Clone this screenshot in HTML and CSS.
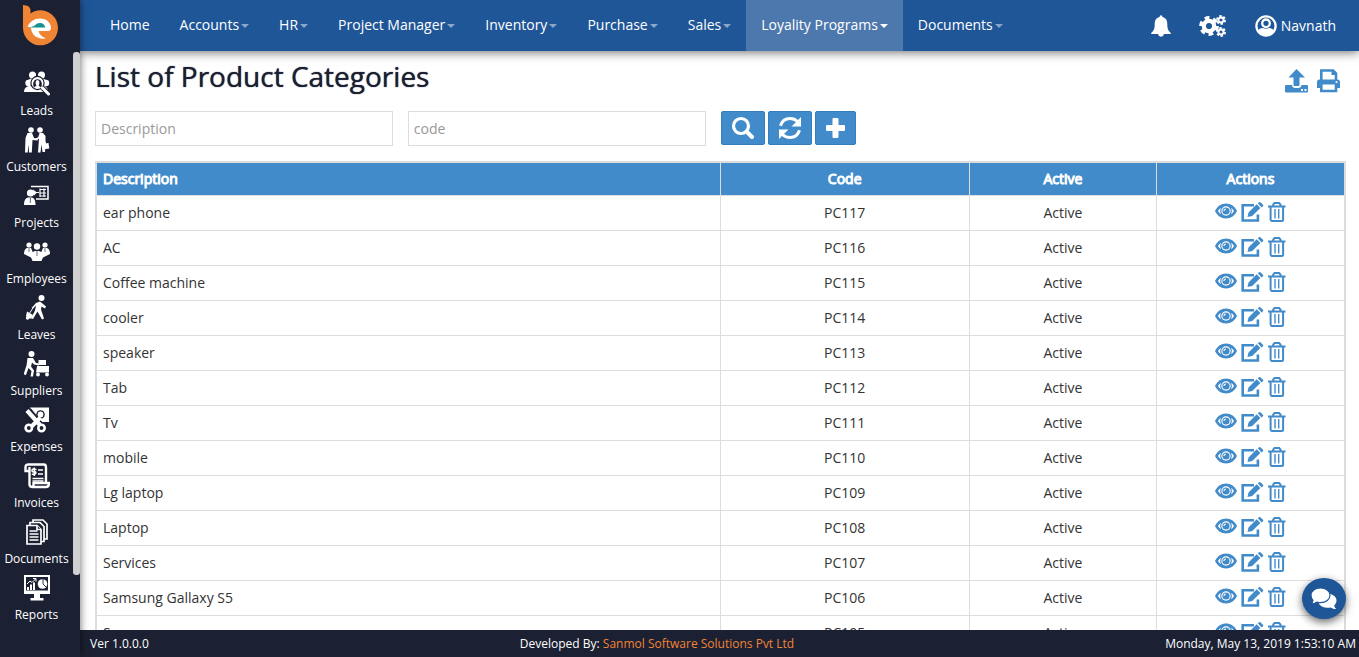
FILE: index.html
```html
<!DOCTYPE html>
<html lang="en">
<head>
<meta charset="utf-8">
<meta name="viewport" content="width=device-width, initial-scale=1">
<title>List of Product Categories</title>
<link rel="stylesheet" href="styles.css">
</head>
<body>
<svg class="sprite" aria-hidden="true">
  <symbol id="eye" viewBox="0 0 22 16"><path fill="currentColor" d="M11 0.500C6 .5 2 3.500 0 8c2 4.500 6 7.500 11 7.500s9-3 11-7.500C20 3.500 16 .5 11 .5z"/><path fill="#fff" d="M3 8q1-2 2.800-3.300-1.300 3.300 0 6.600Q4 10 3 8zM19 8q-1-2-2.800-3.300 1.300 3.300 0 6.600Q18 10 19 8z"/><circle cx="11" cy="8" r="4.700" fill="#fff"/><circle cx="11" cy="8" r="3.600" fill="currentColor"/><path d="M9 8q0-2 2-2" fill="none" stroke="#fff" stroke-width="1.100"/></symbol>
  <symbol id="edit" viewBox="0 0 23 20"><path fill="none" stroke="currentColor" stroke-width="2.600" d="M13 3.200H1.700v15.300h15.200v-6"/><path fill="currentColor" d="M6.500 15l1-4.600 8.200-8.200 3.700 3.700-8.200 8.200zM16.800 1.300L18 .2q.8-.5 1.600.2l2.400 2.300q.6.800 0 1.500l-1.400 1.200z"/></symbol>
  <symbol id="trash" viewBox="0 0 18 20"><path fill="none" stroke="currentColor" stroke-width="2" d="M0 4.500h17.500M5.200 4V2.500L6.500 1h4.700l1.300 1.500V4M2.600 5v12.500q0 1.500 1.500 1.500h9.500q1.500 0 1.500-1.500V5"/><path fill="none" stroke="currentColor" stroke-width="1.400" d="M7 7v9.500M10.700 7v9.500"/></symbol>
  <symbol id="gear" viewBox="-10 -10 20 20"><circle r="5.200" fill="none" stroke="currentColor" stroke-width="4.200"/><circle r="8.100" fill="none" stroke="currentColor" stroke-width="3.600" pathLength="12" stroke-dasharray="1.100 .9"/></symbol>
</svg>
<div class="app">
  <aside class="sidebar">
    <a class="logo" href="#" aria-label="Home page"><svg width="36" height="42" viewBox="0 0 36 42"><path fill="#f08435" d="M0 0c4 .2 7.500 1.500 7.500 5.500v3A17.500 17.500 0 1 1 0 23z"/><path fill="#fff" d="M4.500 21.500C7 17 11 13.500 17 13.500c6.500 0 11 4.200 11 9.500 0 2-1 3-3 3h-9.500c.5 3 3.500 6 7.500 7.500-9 1-14.500-3.500-15-10.500z"/><path fill="#16918f" d="M4 22.500c4 0 6.500-1 8.500-2.500 1.500-3 9-3 9.800 2.500z"/></svg></a>
    <div class="side-body">
      <nav class="side-menu" aria-label="Modules">
        <a href="#"><svg viewBox="0 0 26 26" fill="#fff"><circle cx="8.500" cy="4" r="3.500"/><circle cx="17.500" cy="4" r="3.500"/><circle cx="4.500" cy="12" r="3.200"/><circle cx="22" cy="12" r="3.200"/><path d="M4 9q4-3 9-1 5-2 9 1v5H4zM0 21q0-5 5-6h15q4 1 4 6z"/><circle cx="13.500" cy="12" r="6.600" fill="#fff" stroke="#1b2032" stroke-width="1.200"/><path d="M10 16.500q-2-4 .5-7.200Q13.500 7 16.500 9.300q2.500 3.200.5 7.200l-2.500-2q1.300-2 .8-4-.5-1.500-1.800-1.500T11.700 10.500q-.5 2 .8 4z" fill="#1b2032"/><path d="M18.500 17l6.500 6" stroke="#1b2032" stroke-width="5"/><path d="M18.500 17l6 6" stroke="#fff" stroke-width="3" stroke-linecap="round"/></svg><span>Leads</span></a>
        <a href="#"><svg viewBox="0 0 26 26" fill="#fff"><circle cx="7" cy="3" r="2.800"/><circle cx="16" cy="3" r="2.800"/><path d="M3.500 6H8l2 5 4 .5-.5 2-5-.5-.7 12.500H5l-.5-8-.8 8H1L1.500 11zM15.500 6H19l2.500 3v9L21 25h-2.500l-1-8-1 8.500H14l1-14-2.500 2-1.200-1.500 3-2z"/><path d="M17.500 17l7-1 .8 5.500-7 1zM19 17v-2h3v2"/></svg><span>Customers</span></a>
        <a href="#"><svg viewBox="0 0 26 26" fill="#fff"><path d="M7 3.500h17v12.500H12" fill="none" stroke="#fff" stroke-width="1.500"/><circle cx="6.500" cy="10" r="3.600"/><path d="M0 22q0-7 4-7.500h4q3.500.5 3.500 7.500z"/><path d="M9 6.500l4 3-3 3z"/><path d="M12 9.500h3M16 6.500h6M16 10h6M16 13h6M16 5.500v8.500M20 5.500v8.500" stroke="#fff" stroke-width="1.200"/><path d="M5.800 15h1.200v5H5.800z" fill="#7c8597"/></svg><span>Projects</span></a>
        <a href="#"><svg viewBox="0 0 26 26" fill="#fff"><circle cx="5" cy="6" r="2.600"/><circle cx="21" cy="6" r="2.600"/><path d="M0 15q0-5 3-6h4l3 7-2 3zM26 15q0-5-3-6h-4l-3 7 2 3z"/><circle cx="13" cy="7.500" r="3.200"/><path d="M6.500 17q2-5 5-5h3q3 0 5 5l-2 5h-9z"/><path d="M12.500 12h1v5h-1zM4.500 9H5.500v4h-1zM20.500 9H21.500v4h-1z" fill="#6a7285"/></svg><span>Employees</span></a>
        <a href="#"><svg viewBox="0 0 26 26" fill="#fff"><circle cx="17.500" cy="3" r="3"/><path d="M12 8l4-1.500 2.500 2 3.500 3-1 2-3.500-2-.5 3 3 9-2 1-4.500-8L9 24l-2-.5 4-8 1-5-3 3-1.500-.5z"/><path d="M9 13L5 19" stroke="#fff"/><path d="M3 16.500l6 3.500-2 3.500H4L2 21z"/><circle cx="3.500" cy="23" r="1.700"/></svg><span>Leaves</span></a>
        <a href="#"><svg viewBox="0 0 26 26" fill="#fff"><circle cx="7.500" cy="3" r="3"/><path d="M3.500 7H9l3 5 3 .5v2l-5-1-2-2-1 4 3 4-1 6H6.500l1-5.500-3-3-2.500 7-2.500-.5 3-9z"/><path d="M14.500 9h7.500v5h-7.500zM13 15h12v6.500H12zM24 15.500l1-5"/><circle cx="14" cy="23.500" r="1.900"/><circle cx="23" cy="23.500" r="1.900"/></svg><span>Suppliers</span></a>
        <a href="#"><svg viewBox="0 0 26 26" fill="#fff"><path d="M6 .5h19V15h-7L10 8z"/><circle cx="16.500" cy="7.500" r="4.300" fill="#1b2032"/><circle cx="16.500" cy="7.500" r="2.900"/><path d="M4.500 3.500l11.500 14" stroke="#1b2032" stroke-width="6.500"/><path d="M3 3.500L16 18M16.500 10.500L7 20" stroke="#fff" stroke-width="4.200"/><g fill="#1b2032" stroke="#fff" stroke-width="2.600"><circle cx="4.800" cy="21" r="3.200"/><circle cx="17.500" cy="21" r="3.200"/></g></svg><span>Expenses</span></a>
        <a href="#"><svg viewBox="0 0 26 26" fill="none" stroke="#fff" stroke-width="2.400"><path d="M5 8H1.500V4.500q0-3 3-3H20q2 0 2 3V19M5.500 4v17.500q0 2.500 3 2.500h13.500q3 0 3-4H9.500v2q0 2-2 2"/><path d="M14 7h5M14 11h5M8.500 15.500h11M8.500 18h11" stroke-width="1.600"/><path d="M12.500 6.500q-4.500-1.500-4.500.8t3.500 1.700q1.500 2.500-3.700 2.200M10.300 4.500v8.500" stroke-width="1.600"/></svg><span>Invoices</span></a>
        <a href="#"><svg viewBox="0 0 26 26" fill="#1b2032" stroke="#fff" stroke-width="1.700"><path d="M9 1h10l4 4v15H9z"/><path d="M6 3.500h10l4 4v15H6z"/><path d="M3 6.500h10l4 4V25H3z"/><path d="M13 6.500v4h4"/><path d="M5.500 12h8M5.500 15h9M5.500 18h9M5.500 21h9"/></svg><span>Documents</span></a>
        <a href="#"><svg viewBox="0 0 26 26" fill="#fff"><path d="M0 0h26v19H0z"/><path d="M2 2h22v13.500H2z" fill="#1b2032"/><path d="M10 19h6v4h3.500v2.500h-13V23H10zM3 12h2v3H3zM6 9.500h2V15H6zM9 7.500h2V15H9z"/><path d="M3 9l3-3 2 1.500L11.500 4M9 3.500h3v3" fill="none" stroke="#fff"/><circle cx="18.500" cy="9" r="4.800"/><path d="M19 4v5l3 3" fill="none" stroke="#1b2032" stroke-width=".9"/></svg><span>Reports</span></a>
      </nav>
      <div class="scroll-track"><div class="scroll-thumb"></div></div>
    </div>
  </aside>
  <div class="page">
    <header class="topbar">
      <nav class="top-menu" aria-label="Main">
        <a href="#">Home</a><a href="#">Accounts<i class="caret"></i></a><a href="#">HR<i class="caret"></i></a><a href="#">Project Manager<i class="caret"></i></a><a href="#">Inventory<i class="caret"></i></a><a href="#">Purchase<i class="caret"></i></a><a href="#">Sales<i class="caret"></i></a><a class="active" href="#">Loyality Programs<i class="caret"></i></a><a href="#">Documents<i class="caret"></i></a>
      </nav>
      <div class="tools">
        <button type="button" aria-label="Notifications"><svg width="20" height="22" viewBox="0 0 20 22"><path fill="currentColor" d="M8.500 2Q8.500.3 10 .3T11.500 2C15 3 16.300 5.500 16.300 9c0 4.500.7 6.500 3.500 9v1H.2v-1C3 15.500 3.700 13.500 3.700 9c0-3.500 1.300-6 4.800-7zM7 19h6q-.5 2.700-3 2.700T7 19z"/></svg></button>
        <button type="button" aria-label="Settings"><svg width="28" height="22" viewBox="0 0 28 22"><use href="#gear" x="0" y="1" width="20" height="20"/><use href="#gear" x="17" y="0" width="10" height="10"/><use href="#gear" x="17" y="12" width="10" height="10"/></svg></button>
        <a class="user" href="#"><svg width="22" height="22" viewBox="0 0 22 22"><circle cx="11" cy="11" r="9.600" fill="none" stroke="currentColor" stroke-width="2.300"/><circle cx="11" cy="8.300" r="3.800" fill="none" stroke="currentColor" stroke-width="2.300"/><path fill="currentColor" d="M3 16q1-3 5-3 3 1.300 6 0 4 0 5 3a10 10 0 0 1-16 0z"/></svg>Navnath</a>
      </div>
    </header>
    <main class="content">
      <div class="heading">
        <h1>List of Product Categories</h1>
        <div class="heading-tools">
          <button type="button" aria-label="Export"><svg width="24" height="24" viewBox="0 0 24 24"><path fill="currentColor" d="M11.500 0L20 8.500h-5.500V16q0 1-1 1h-4q-1 0-1-1V8.500H3.500zM1 16h6q.3 3 3 3h3.500q2.500 0 3-3H22q1 0 1 1v5.500q0 1-1 1H1q-1 0-1-1V17q0-1 1-1z"/><path fill="#fff" d="M16 20h2v2h-2zM19.500 20h2v2h-2z"/></svg></button>
          <button type="button" aria-label="Print"><svg width="24" height="24" viewBox="0 0 24 24"><path fill="none" stroke="currentColor" stroke-width="2.600" d="M4.300 11V1.500H16l3 3V11M4.300 15v7h14.700v-7"/><path fill="currentColor" d="M14.500 1v5H20V4l-3-3zM2.500 10.500h18q2.500 0 2.500 2.500v6h-3v-3.500H3V19H0v-6q0-2.500 2.500-2.500z"/><circle cx="19.500" cy="13" r="1" fill="#fff"/></svg></button>
        </div>
      </div>
      <form class="filters">
        <input type="text" placeholder="Description" aria-label="Description">
        <input type="text" placeholder="code" aria-label="Code">
        <div class="filter-buttons">
          <button type="button" aria-label="Search"><svg width="24" height="24" viewBox="0 0 24 24" fill="none" stroke="currentColor" stroke-linecap="round"><circle cx="10" cy="10" r="7.500" stroke-width="3.200"/><path d="M15.500 15.500l5.500 5.500" stroke-width="4"/></svg></button>
          <button type="button" aria-label="Refresh"><svg width="24" height="24" viewBox="0 0 24 24"><path d="M2.500 9.800C4 5 7.500 2.500 12 2.500c3 0 5.500 1 7.500 3M21.500 14.200C20 19 16.500 21.500 12 21.500c-3 0-5.500-1-7.500-3" fill="none" stroke="currentColor" stroke-width="3"/><path fill="currentColor" d="M23 1v9.500h-9.500l3.300-3.300 3-3zM1 23v-9.500h9.500l-3.300 3.300-3 3z"/></svg></button>
          <button type="button" aria-label="Add"><svg width="21" height="24" viewBox="0 0 21 24"><path fill="currentColor" d="M8.500 2h4q1 0 1 1v6H19q1 0 1 1v4q0 1-1 1h-5.500v6q0 1-1 1h-4q-1 0-1-1v-6H2q-1 0-1-1v-4q0-1 1-1h5.500V3q0-1 1-1z"/></svg></button>
        </div>
      </form>
      <table>
        <thead><tr><th class="desc" scope="col">Description</th><th class="code" scope="col">Code</th><th scope="col">Active</th><th scope="col">Actions</th></tr></thead>
        <tbody id="rows"></tbody>
      </table>
    </main>
    <button class="chat" type="button" aria-label="Chat"><svg width="26" height="22" viewBox="0 0 26 22"><path fill="#fff" d="M16 5.500c5 0 9.500 3 9.500 7 0 2-1 3.700-2.300 5 .2 1.700 1 2.500 2 3.500-2.200.3-4-.5-5.500-1.500-5 1-10-.5-12-4z"/><path fill="#fff" stroke="#1f5698" stroke-width="1.200" d="M9.500 0C15 0 19 3.300 19 7.300s-4 7.400-9.500 7.400q-2 0-3.700-.6Q3.500 16 0 16q1.700-1.800 2-3.700Q0 10 0 7.300C0 3.300 4 0 9.500 0z"/></svg></button>
    <footer class="footer"><span>Ver 1.0.0.0</span><span>Developed By: <a href="#">Sanmol Software Solutions Pvt Ltd</a></span><span>Monday, May 13, 2019 1:53:10 AM</span></footer>
  </div>
</div>
<script src="rows.js"></script>
</body>
</html>
```
FILE: styles.css
```css
* { box-sizing: border-box; }
body {
  margin: 0;
  font: 14px/20px "Open Sans", sans-serif;
  color: #333;
  background: #fff;
}
a { color: inherit; text-decoration: none; }
button { border: 0; padding: 0; background: none; color: inherit; cursor: pointer; }
svg { display: block; }
.sprite { position: absolute; width: 0; height: 0; }
.app { display: flex; height: 100vh; overflow: hidden; }

.sidebar {
  display: flex;
  flex-direction: column;
  flex: 0 0 80px;
  background: #1b2032;
  color: #fff;
  box-shadow: 0 0 8px rgba(0, 0, 0, .6);
  z-index: 3;
}
.logo { flex: 0 0 52px; padding: 5px 0 0 23px; }
.side-body { display: flex; flex: 1; min-height: 0; }
.side-menu { display: flex; flex-direction: column; gap: 7px; flex: 1; padding-top: 19px; }
.side-menu a {
  display: flex;
  flex-direction: column;
  align-items: center;
  gap: 5px;
  font-size: 12px;
  line-height: 18px;
}
.side-menu svg { width: 26px; height: 26px; }
.scroll-track { width: 7px; }
.scroll-thumb { height: calc(100% - 82px); border-radius: 3px; background: #d0d0d0; }

.page { position: relative; display: flex; flex-direction: column; flex: 1; min-width: 0; }
.topbar {
  display: flex;
  justify-content: space-between;
  flex: 0 0 51px;
  padding: 0 23px 0 15px;
  background: #1f5698;
  color: #fff;
  box-shadow: 0 1px 10px rgba(0, 0, 0, .6);
  z-index: 2;
}
.top-menu { display: flex; }
.top-menu a { display: flex; align-items: center; padding: 0 15px 1px; white-space: nowrap; }
.top-menu .active { background: #4c78ad; }
.caret {
  margin: 2px 0 0 2px;
  border: 4px solid transparent;
  border-top-color: #8aa6c9;
  border-bottom: 0;
}
.active .caret { border-top-color: #fff; }
.tools { display: flex; align-items: center; gap: 28px; }
.user { display: flex; align-items: center; gap: 4px; }

.content { flex: 1; min-height: 0; padding: 8px 13px 0 15px; overflow-y: auto; scrollbar-width: none; }
.heading { display: flex; justify-content: space-between; align-items: center; height: 36px; padding-right: 5px; }
h1 {
  margin: 0;
  padding-bottom: 2px;
  font-size: 28px;
  line-height: 34px;
  font-weight: 400;
  color: #1b2032;
  text-shadow: 0 0 1px #1b2032;
}
.heading-tools { display: flex; gap: 8px; padding-top: 8px; color: #428bca; }
.filters { display: flex; gap: 15px; margin: 16px 0 15px; }
.filters input {
  flex: 0 0 calc(25% - 15px);
  min-width: 0;
  height: 35px;
  padding: 0 5px;
  border: 1px solid #ddd;
  font: inherit;
  color: #333;
}
.filters input::placeholder { color: #999; }
.filter-buttons { display: flex; gap: 3px; color: #fff; }
.filter-buttons button {
  height: 34px;
  padding: 0 9px;
  border: 1px solid #357ebd;
  border-radius: 2px;
  background: #428bca;
}

table { width: 100%; table-layout: fixed; border: 2px solid #ddd; border-spacing: 0; }
th, td {
  padding: 0 6px;
  border-right: 1px solid #ddd;
  border-bottom: 1px solid #ddd;
  text-align: center;
}
th:last-child, td:last-child { border-right: 0; }
th:first-child, td:first-child { text-align: left; }
.desc { width: 50%; }
.code { width: 20%; }
th {
  height: 33px;
  background: #428bca;
  color: #fff;
  font-weight: 400;
  -webkit-text-stroke: 1px #fff;
}
td { height: 35px; }
.actions { display: flex; justify-content: center; gap: 4px; padding-bottom: 2px; color: #428bca; }
.view { width: 22px; height: 16px; margin-top: 1px; }
.edit { width: 23px; height: 20px; }
.delete { width: 18px; height: 20px; }
.actions svg { width: 100%; height: 100%; }

.chat {
  position: absolute;
  right: 13px;
  bottom: 38px;
  display: flex;
  align-items: center;
  justify-content: center;
  width: 44px;
  height: 41px;
  border-radius: 50%;
  background: #1f5698;
  box-shadow: 0 3px 8px rgba(0, 0, 0, .6);
}
.footer {
  display: flex;
  justify-content: space-between;
  align-items: center;
  flex: 0 0 27px;
  padding: 0 3px 0 10px;
  background: #1b2032;
  color: #fff;
  font-size: 12px;
  z-index: 2;
}
.footer a { color: #f08435; }
```
FILE: rows.js
```javascript
const names = ["ear phone", "AC", "Coffee machine", "cooler", "speaker", "Tab", "Tv", "mobile",
  "Lg laptop", "Laptop", "Services", "Samsung Gallaxy S5", "Samsung"];
const action = (cls, icon, label) =>
  `<button type="button" class="${cls}" aria-label="${label}"><svg><use href="#${icon}"/></svg></button>`;
document.getElementById("rows").innerHTML = names.map((name, i) => `
  <tr><td>${name}</td><td>PC${117 - i}</td><td>Active</td>
  <td><div class="actions">${action("view", "eye", "View")}${action("edit", "edit", "Edit")}${action("delete", "trash", "Delete")}</div></td></tr>`).join("");
```
